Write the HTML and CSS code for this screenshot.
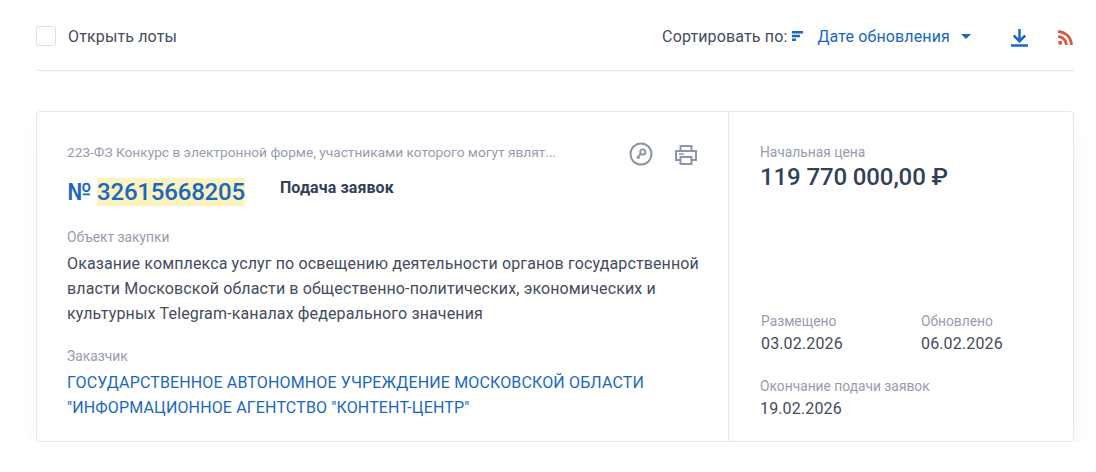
FILE: index.html
```html
<!DOCTYPE html>
<html lang="ru">
<head>
    <meta charset="UTF-8">
    <meta name="viewport" content="width=device-width, initial-scale=1.0">
    <title>Закупки</title>
    <link rel="stylesheet" href="styles.css">
</head>
<body>
    <div class="toolbar">
        <label class="open-lots">
            <span class="checkbox"></span>
            <span>Открыть лоты</span>
        </label>
        <div class="toolbar-right">
            <span class="sort-label">Сортировать по:</span>
            <svg class="sort-icon" width="11" height="10" viewBox="0 0 11 10"><path d="M0 0h11v2.600H0zM0 3.800h8v2.500H0zM0 7.500h4V10H0z" fill="#1a68c0"/></svg>
            <span class="sort-value">Дате обновления</span>
            <span class="caret"></span>
            <svg class="download-icon" width="17" height="18" viewBox="0 0 17 18"><path d="M8.500 0v12M2.800 6.500l5.700 5.700 5.700-5.700" fill="none" stroke="#1a68c0" stroke-width="2.500"/><path d="M0 16.500h17" stroke="#1a68c0" stroke-width="2.500"/></svg>
            <svg class="rss-icon" width="16" height="15" viewBox="0 0 16 15"><circle cx="2.200" cy="12.800" r="2.100" fill="#d9573f"/><path d="M0 6.600a8.300 8.300 0 0 1 8.300 8.400M0 1.600a13.400 13.400 0 0 1 13.400 13.400" fill="none" stroke="#d9573f" stroke-width="2.800"/></svg>
        </div>
    </div>

    <div class="card">
        <div class="card-main">
            <div class="card-head">
                <div class="purchase-type">223-ФЗ Конкурс в электронной форме, участниками которого могут являт...</div>
                <div class="card-icons">
                    <svg width="24" height="24" viewBox="0 0 24 24" fill="none" stroke="#8e95a8"><circle cx="12" cy="12" r="10.500" stroke-width="2"/><circle cx="13.800" cy="10" r="2.600" stroke-width="1.900"/><path d="M11.800 12l-4 4.200M9 15l1.600 1.500" stroke-width="1.900"/></svg>
                    <svg class="print-icon" width="22" height="20" viewBox="0 0 22 20" fill="none" stroke="#8e95a8" stroke-width="2"><path d="M5.500 6V1h11v5M5.500 15H1V6h20v9h-4.500"/><path d="M5.500 12h11v7h-11z"/><path d="M4 9h5" stroke-width="1.500"/></svg>
                </div>
            </div>
            <div class="number-row">
                <div class="number">№ <mark>32615668205</mark></div>
                <div class="status">Подача заявок</div>
            </div>
            <div class="label object-label">Объект закупки</div>
            <div class="object-text">Оказание комплекса услуг по освещению деятельности органов государственной власти Московской области в общественно-политических, экономических и культурных Telegram-каналах федерального значения</div>
            <div class="label customer-label">Заказчик</div>
            <a class="customer" href="#">ГОСУДАРСТВЕННОЕ АВТОНОМНОЕ УЧРЕЖДЕНИЕ МОСКОВСКОЙ ОБЛАСТИ "ИНФОРМАЦИОННОЕ АГЕНТСТВО "КОНТЕНТ-ЦЕНТР"</a>
        </div>
        <div class="card-side">
            <div class="label">Начальная цена</div>
            <div class="price">119 770 000,00 ₽</div>
            <div class="dates">
                <div class="date-block">
                    <div class="label">Размещено</div>
                    <div class="date">03.02.2026</div>
                </div>
                <div>
                    <div class="label">Обновлено</div>
                    <div class="date">06.02.2026</div>
                </div>
            </div>
            <div class="label end-label">Окончание подачи заявок</div>
            <div class="date">19.02.2026</div>
        </div>
    </div>
</body>
</html>
```

FILE: styles.css
```css
* {
    margin: 0;
    padding: 0;
    box-sizing: border-box;
}

body {
    padding: 0 22px 0 36px;
    background: white;
    color: #334059;
    font-family: Roboto, "Liberation Sans", sans-serif;
    font-size: 16px;
    letter-spacing: 0.14px;
}

.toolbar {
    display: flex;
    justify-content: space-between;
    align-items: center;
    height: 71px;
    padding-top: 2px;
    border-bottom: 1px solid #e4e5e9;
}

.open-lots {
    display: flex;
    align-items: center;
    gap: 12px;
    color: #444c5e;
}

.checkbox {
    width: 20px;
    height: 20px;
    border: 1px solid #dfe0e4;
    border-radius: 2px;
}

.toolbar-right {
    display: flex;
    align-items: center;
}

.sort-label {
    color: #444c5e;
}

.sort-icon {
    margin-left: 5px;
}

.sort-value {
    margin-left: 14px;
    color: #1a68c0;
}

.caret {
    margin-left: 11px;
    border-left: 5px solid transparent;
    border-right: 5px solid transparent;
    border-top: 5px solid #1a68c0;
}

.download-icon {
    margin-left: 40px;
    margin-top: 4px;
}

.rss-icon {
    margin-left: 30px;
    margin-top: 3px;
}

.card {
    display: flex;
    height: 331px;
    margin-top: 40px;
    border: 1px solid #e7e8eb;
    border-radius: 4px;
    box-shadow: 0 14px 24px -8px rgba(60, 70, 100, 0.1);
}

.card-main {
    flex: none;
    width: 692px;
    padding: 30px 30px 0;
    border-right: 1px solid #e7e8eb;
}

.card-head {
    display: flex;
    justify-content: space-between;
    height: 24px;
}

.purchase-type {
    font-size: 13.7px;
    line-height: 20px;
    letter-spacing: 0;
    color: #969cae;
}

.card-icons {
    display: flex;
    align-items: center;
    gap: 22px;
    margin-right: 1px;
}

.print-icon {
    margin-top: 1px;
}

.number-row {
    display: flex;
    margin-top: 10px;
}

.number {
    font-size: 24px;
    font-weight: 500;
    line-height: 32px;
    letter-spacing: -0.2px;
    color: #1a68c0;
}

mark {
    background: #fdf3bf;
    color: #1a68c0;
}

.status {
    margin-left: 35px;
    margin-top: 1px;
    font-weight: 700;
    line-height: 22px;
    letter-spacing: 0.1px;
    color: #334059;
}

.label {
    font-size: 13.8px;
    line-height: 20px;
    letter-spacing: 0;
    color: #969cae;
}

.object-label {
    margin-top: 19px;
}

.object-text {
    margin-top: 4px;
    margin-right: -6px;
    line-height: 25px;
    letter-spacing: 0.13px;
    color: #444c5e;
}

.customer-label {
    margin-top: 20px;
}

.customer {
    display: block;
    margin-top: 4px;
    line-height: 25px;
    color: #1a68c0;
    text-decoration: none;
}

.card-side {
    flex: 1;
    padding: 30px 30px 0 31px;
}

.price {
    font-size: 24px;
    font-weight: 500;
    line-height: 30px;
    letter-spacing: -0.12px;
    color: #334059;
}

.dates {
    display: flex;
    margin-top: 119px;
    margin-left: 1px;
}

.date-block {
    width: 160px;
}

.date {
    margin-top: 1px;
    line-height: 24px;
    color: #444c5e;
}

.end-label {
    margin-top: 20px;
}
```
